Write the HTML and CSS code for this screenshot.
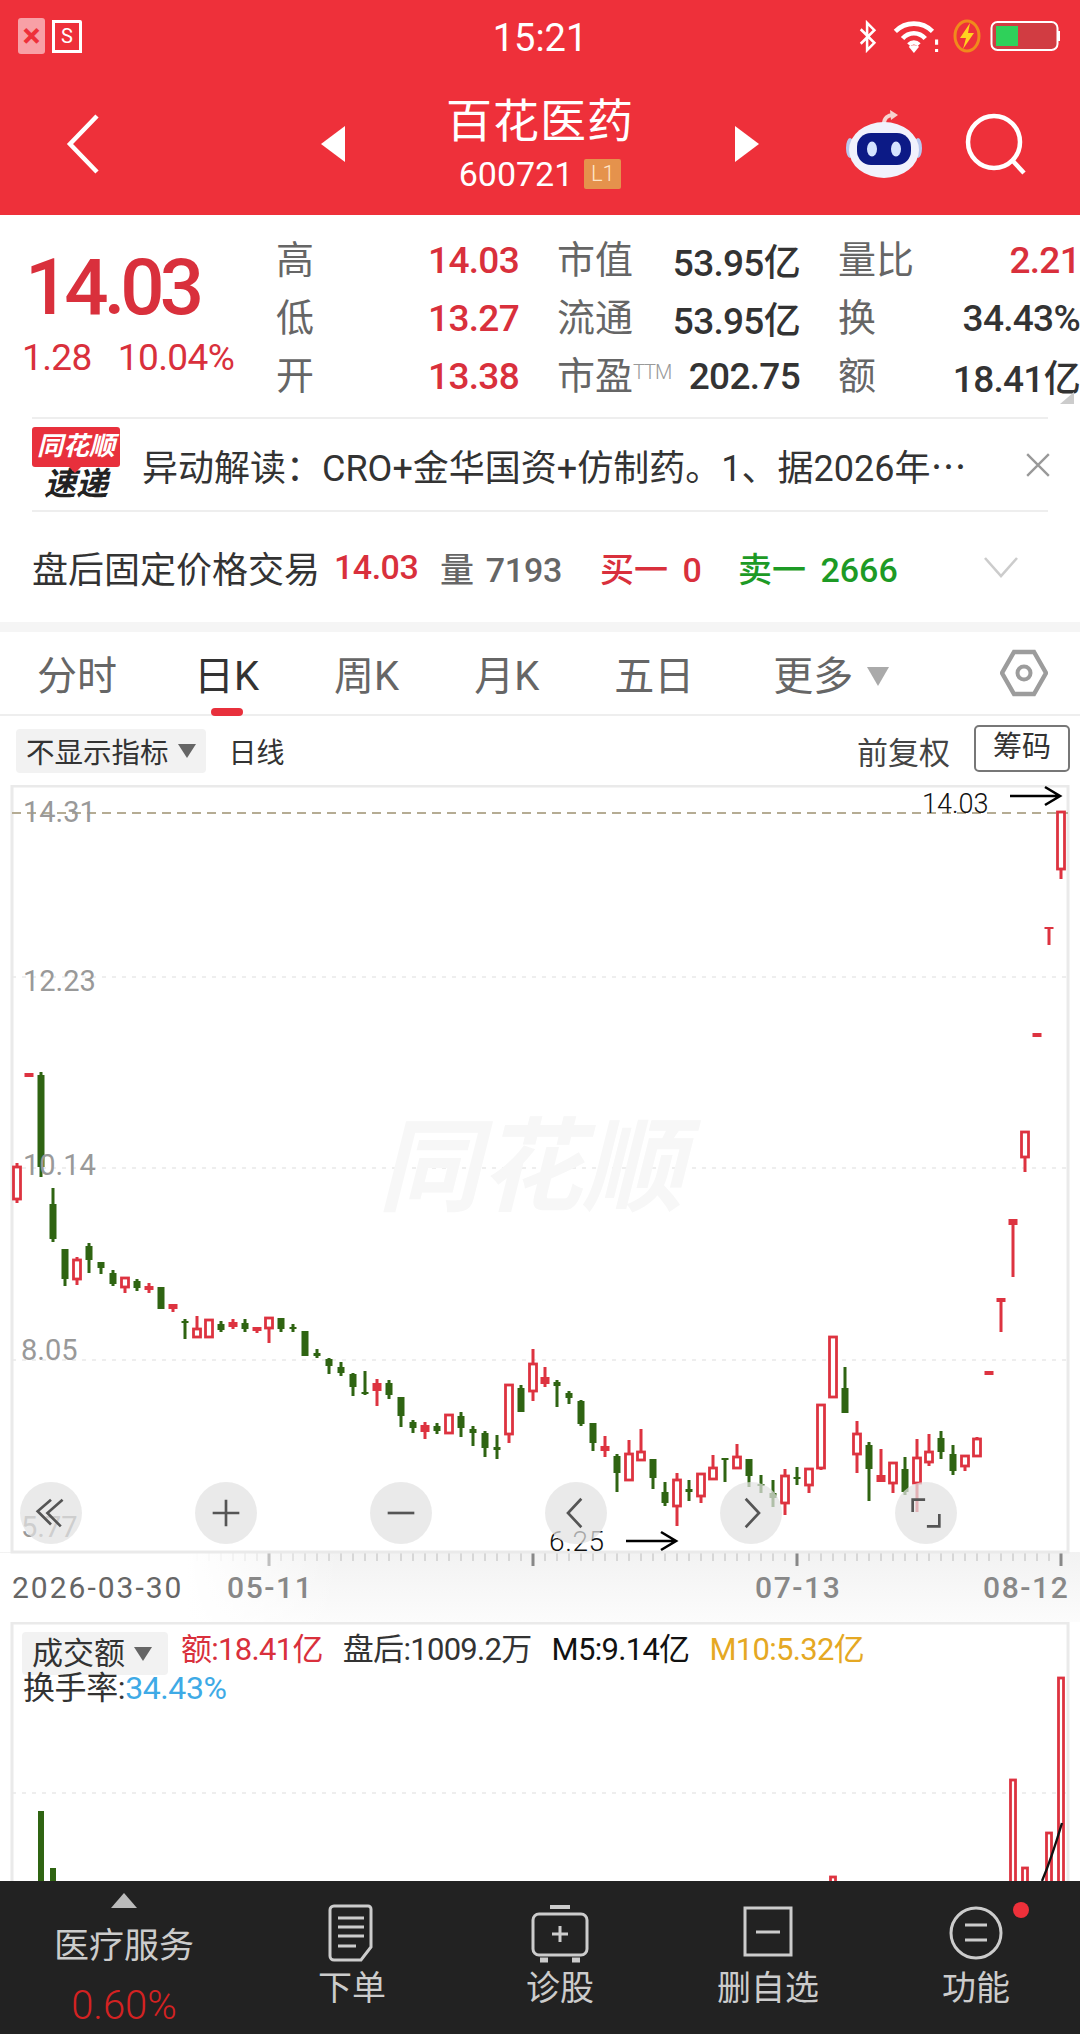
FILE: index.html
```html
<!DOCTYPE html>
<html lang="zh-CN">
<head>
  <meta charset="UTF-8">
  <meta name="viewport" content="width=device-width, initial-scale=1.0">
  <title>百花医药 600721</title>
  <link rel="stylesheet" href="styles.css">
</head>
<body>
  <header class="top">
    <div class="status">
      <div class="status-left">
        <span class="shot-x">×</span>
        <span class="shot-s">S</span>
      </div>
      <div class="clock">15:21</div>
      <div class="status-right">
        <svg class="ic-bt" viewBox="0 0 22 34" fill="none" stroke="#fff" stroke-width="2.8"><path d="M3 9 18 24 10 32V2l8 8L3 25"/></svg>
        <svg class="ic-wifi" viewBox="0 0 46 32" fill="none" stroke="#fff" stroke-width="4.4"><path d="M2 11C12 1 28 1 38 11"/><path d="M9 18C15 11 25 11 31 18"/><path d="M15 24C18 21 22 21 25 24"/><path d="M20 32 15 26C18 24 22 24 25 26Z" fill="#fff" stroke="none"/><path d="M42 19v5M42 28v3" stroke-width="3"/></svg>
        <svg class="ic-charge" viewBox="0 0 28 34"><ellipse cx="14" cy="17" rx="12" ry="15" fill="none" stroke="#f08a1c" stroke-width="3"/><path d="M17 4 7 19h6l-3 11 11-16h-6z" fill="#ffd21f"/></svg>
        <svg class="ic-batt" viewBox="0 0 72 32"><rect x="1.5" y="2" width="66" height="28" rx="6" fill="#b3474a" fill-opacity=".5" stroke="#fff" stroke-width="2"/><rect x="6" y="6" width="22" height="20" fill="#2fd15a"/><path d="M69 11v10" stroke="#fff" stroke-width="2"/></svg>
      </div>
    </div>
    <nav class="nav">
      <svg class="ic-back" viewBox="0 0 34 60" fill="none" stroke="#fff" stroke-width="4.5"><path d="M31 2 4 30l27 28"/></svg>
      <svg class="ic-tri" viewBox="0 0 24 36"><path d="M24 0v36L0 18z" fill="#fff"/></svg>
      <div class="title">
        <div class="name">百花医药</div>
        <div class="code">600721<span class="lv">L1</span></div>
      </div>
      <svg class="ic-tri" viewBox="0 0 24 36"><path d="M0 0v36l24-18z" fill="#fff"/></svg>
      <svg class="ic-robot" viewBox="0 0 80 68">
        <path d="M40 14C40 8 44 5 49 5" fill="none" stroke="#f6d3d0" stroke-width="4"/>
        <path d="M46 0l8 5-7 5z" fill="#f6d3d0"/>
        <ellipse cx="6" cy="38" rx="4" ry="10" fill="#b9c8ee"/>
        <ellipse cx="74" cy="38" rx="4" ry="10" fill="#b9c8ee"/>
        <ellipse cx="40" cy="40" rx="35" ry="28" fill="#f1f2fc"/>
        <rect x="13" y="23" width="54" height="32" rx="14" fill="#0c1a86"/>
        <ellipse cx="28" cy="39" rx="5" ry="7.5" fill="#d5e4ff"/>
        <ellipse cx="52" cy="39" rx="5" ry="7.5" fill="#d5e4ff"/>
      </svg>
      <svg class="ic-search" viewBox="0 0 62 62" fill="none" stroke="#fff" stroke-width="4.5"><circle cx="29" cy="29" r="26"/><path d="M47 47l12 13"/></svg>
    </nav>
  </header>

  <section class="quote">
    <div class="price-box">
      <div class="price">14.03</div>
      <div class="change"><span>1.28</span><span>10.04%</span></div>
    </div>
    <div class="stats">
      <div class="stat"><span class="k">高</span><span class="v up">14.03</span></div>
      <div class="stat"><span class="k">市值</span><span class="v">53.95亿</span></div>
      <div class="stat"><span class="k">量比</span><span class="v up">2.21</span></div>
      <div class="stat"><span class="k">低</span><span class="v up">13.27</span></div>
      <div class="stat"><span class="k">流通</span><span class="v">53.95亿</span></div>
      <div class="stat"><span class="k">换</span><span class="v">34.43%</span></div>
      <div class="stat"><span class="k">开</span><span class="v up">13.38</span></div>
      <div class="stat"><span class="k">市盈<sup class="ttm">TTM</sup></span><span class="v">202.75</span></div>
      <div class="stat"><span class="k">额</span><span class="v">18.41亿</span></div>
    </div>
    <div class="corner"></div>
  </section>

  <section class="news">
    <div class="news-logo">
      <div class="logo-tag">同花顺</div>
      <div class="logo-sub">速递</div>
    </div>
    <div class="news-text">异动解读：CRO+金华国资+仿制药。1、据2026年⋯</div>
    <svg class="ic-close" viewBox="0 0 24 24" fill="none" stroke="#999" stroke-width="2.2"><path d="M2 2l20 20M22 2 2 22"/></svg>
  </section>

  <section class="after">
    <span class="after-name">盘后固定价格交易</span>
    <span class="up after-price">14.03</span>
    <span class="after-vol">量 7193</span>
    <span class="up after-buy">买一 0</span>
    <span class="down after-sell">卖一 2666</span>
    <svg class="ic-more" viewBox="0 0 36 22" fill="none" stroke="#ccc" stroke-width="2.6"><path d="M2 2l16 18L34 2"/></svg>
  </section>

  <div class="band"></div>

  <div class="tabs">
    <span class="tab tab-first">分时</span>
    <span class="tab active">日K</span>
    <span class="tab">周K</span>
    <span class="tab">月K</span>
    <span class="tab">五日</span>
    <span class="tab tab-last">更多<i class="caret"></i></span>
    <svg class="ic-hex" viewBox="0 0 48 48" fill="none" stroke="#9c9c9c"><path d="M14 3h20l12 21-12 21H14L2 24z" stroke-width="4.4"/><circle cx="24" cy="24" r="6.5" stroke-width="4"/></svg>
  </div>

  <div class="tools">
    <span class="pick">不显示指标<i class="caret-sm"></i></span>
    <span class="line-type">日线</span>
    <span class="adjust">前复权</span>
    <span class="chip">筹码</span>
  </div>

  <div class="kline">
    <svg class="kline-svg" viewBox="0 785 1080 837" width="1080" height="837">
      <defs>
        <linearGradient id="axisV" x1="0" y1="0" x2="0" y2="1">
          <stop offset="0" stop-color="#f2f2f2"/>
          <stop offset="1" stop-color="#fcfcfc"/>
        </linearGradient>
        <linearGradient id="axisH" x1="0" y1="0" x2="1" y2="0">
          <stop offset=".55" stop-color="#fff"/>
          <stop offset="1" stop-color="#fff" stop-opacity="0"/>
        </linearGradient>
      </defs>
      <rect x="0" y="1552" width="1080" height="70" fill="url(#axisV)"/>
      <g id="ticks"></g>
      <rect x="0" y="1553" width="340" height="69" fill="url(#axisH)"/>
      <rect x="12" y="786" width="1056" height="766" fill="none" stroke="#eaeaea" stroke-width="3"/>
      <g class="grid">
        <path d="M12 977H1068M12 1168H1068M12 1360H1068"/>
      </g>
      <path class="top-line" d="M12 813H1068"/>
      <text class="mark" x="378" y="1203">同花顺</text>
      <g id="candles"></g>
      <text class="scale" x="23" y="822">14.31</text>
      <text class="scale" x="23" y="991">12.23</text>
      <text class="scale" x="23" y="1175">10.14</text>
      <text class="scale" x="21" y="1360">8.05</text>
      <text class="scale" x="21" y="1537">5.77</text>
      <text class="tip" x="922" y="813">14.03</text>
      <path class="arrow" d="M1010 796H1060M1045 787 1060 796 1045 805"/>
      <text class="tip tip-low" x="549" y="1551">6.25</text>
      <path class="arrow" d="M626 1541H676M661 1532 676 1541 661 1550"/>
      <text class="date dark" x="12" y="1598">2026-03-30</text>
      <text class="date" x="227" y="1598">05-11</text>
      <text class="date" x="755" y="1598">07-13</text>
      <text class="date" x="983" y="1598">08-12</text>
    </svg>
    <div class="float-btns">
      <span class="fbtn"><svg viewBox="0 0 36 36" fill="none" stroke="#555" stroke-width="3"><path d="M18 4 3 17l15 15M31 4 14 19l15 15" transform="translate(0 -1)"/></svg></span>
      <span class="fbtn"><svg viewBox="0 0 36 36" fill="none" stroke="#555" stroke-width="3"><path d="M3 18h30M18 3v30"/></svg></span>
      <span class="fbtn"><svg viewBox="0 0 36 36" fill="none" stroke="#555" stroke-width="3"><path d="M3 18h30"/></svg></span>
      <span class="fbtn"><svg viewBox="0 0 36 36" fill="none" stroke="#555" stroke-width="3"><path d="M24 2 9 18l15 16"/></svg></span>
      <span class="fbtn"><svg viewBox="0 0 36 36" fill="none" stroke="#555" stroke-width="3"><path d="M12 2l15 16-15 16"/></svg></span>
      <span class="fbtn"><svg viewBox="0 0 36 36" fill="none" stroke="#555" stroke-width="3"><path d="M17 3H3v14M19 33h14V19"/></svg></span>
    </div>
  </div>

  <div class="volume">
    <svg class="volume-svg" viewBox="0 1622 1080 259" width="1080" height="259">
      <rect x="12" y="1623" width="1056" height="270" fill="none" stroke="#eaeaea" stroke-width="3"/>
      <path class="grid-line" d="M12 1793H1068"/>
      <g id="bars"></g>
      <path class="ma" d="M1042 1881C1050 1862 1054 1850 1062 1823"/>
    </svg>
    <div class="legend">
      <span class="pick pick-vol">成交额<i class="caret-sm"></i></span>
      <span class="up">额:18.41亿</span>
      <span>盘后:1009.2万</span>
      <span class="m5">M5:9.14亿</span>
      <span class="m10">M10:5.32亿</span>
    </div>
    <div class="legend-two">换手率:<span class="rate">34.43%</span></div>
  </div>

  <footer class="bar">
    <div class="bar-sector">
      <i class="caret-up"></i>
      <div class="sector-name">医疗服务</div>
      <div class="sector-pct">0.60%</div>
    </div>
    <div class="bar-item">
      <svg viewBox="0 0 60 60" fill="none" stroke="#ccc" stroke-width="3"><path d="M12 3h34a3 3 0 0 1 3 3v38l-10 13H12a4 4 0 0 1-4-4V7a4 4 0 0 1 4-4z"/><path d="M16 15h26M16 24h26M16 33h26M16 43h18"/></svg>
      <span>下单</span>
    </div>
    <div class="bar-item">
      <svg viewBox="0 0 60 60" fill="none" stroke="#ccc" stroke-width="3"><path d="M20 4h20" stroke-width="4"/><rect x="3" y="11" width="54" height="41" rx="6"/><path d="M22 31h16M30 23v16"/><path d="M10 57h8M42 57h8" stroke-width="5"/></svg>
      <span>诊股</span>
    </div>
    <div class="bar-item">
      <svg viewBox="0 0 60 60" fill="none" stroke="#ccc" stroke-width="3"><rect x="7" y="5" width="46" height="47"/><path d="M18 29h24"/></svg>
      <span>删自选</span>
    </div>
    <div class="bar-item dot">
      <svg viewBox="0 0 60 60" fill="none" stroke="#ccc" stroke-width="3"><circle cx="30" cy="30" r="25"/><path d="M19 22h22M19 37h22"/></svg>
      <span>功能</span>
    </div>
  </footer>

  <script src="chart.js"></script>
</body>
</html>
```

FILE: styles.css
```css
* {
  box-sizing: border-box;
}
html, body {
  margin: 0;
  padding: 0;
}
body {
  width: 1080px;
  height: 2034px;
  overflow: hidden;
  background: #fff;
  color: #333;
  font-family: Roboto, "Noto Sans CJK SC", sans-serif;
}
.up {
  color: #d9303c;
}
.down {
  color: #1d9a25;
}

/* header */
.top {
  height: 215px;
  background: #ee303a;
  color: #fff;
}
.status {
  height: 72px;
  display: grid;
  grid-template-columns: 1fr auto 1fr;
  align-items: center;
}
.status-left {
  display: flex;
  align-items: center;
  gap: 7px;
  padding: 0 0 0 18px;
}
.shot-x {
  width: 27px;
  height: 36px;
  border-radius: 3px;
  background: #f8a0a6;
  color: #ee303a;
  font-size: 34px;
  font-weight: 700;
  line-height: 34px;
  text-align: center;
}
.shot-s {
  width: 30px;
  height: 33px;
  border: 3px solid #fff;
  border-top-right-radius: 2px;
  font-size: 20px;
  line-height: 26px;
  text-align: center;
}
.clock {
  font-size: 38px;
  margin-top: 3px;
}
.status-right {
  display: flex;
  align-items: center;
  justify-content: flex-end;
  padding-right: 18px;
}
.ic-bt {
  width: 20px;
  height: 33px;
  margin-right: 15px;
}
.ic-wifi {
  width: 48px;
  height: 33px;
  margin-right: 12px;
}
.ic-charge {
  width: 28px;
  height: 34px;
  margin-right: 9px;
}
.ic-batt {
  width: 72px;
  height: 32px;
}
.nav {
  height: 143px;
  display: flex;
  align-items: center;
  padding-left: 66px;
}
.ic-back {
  width: 34px;
  height: 60px;
  margin-right: 221px;
}
.ic-tri {
  width: 24px;
  height: 36px;
}
.title {
  width: 390px;
  text-align: center;
}
.name {
  font-size: 46px;
  line-height: 60px;
  letter-spacing: 1px;
  margin-top: -2px;
}
.code {
  display: flex;
  align-items: center;
  justify-content: center;
  gap: 11px;
  font-size: 34px;
  line-height: 40px;
  margin-top: 3px;
}
.lv {
  width: 37px;
  height: 30px;
  border-radius: 2px;
  background: #e5924c;
  color: #ffe6c8;
  font-size: 22px;
  font-weight: 300;
  line-height: 30px;
  text-align: center;
}
.ic-robot {
  width: 80px;
  height: 68px;
  margin-left: 85px;
}
.ic-search {
  width: 62px;
  height: 62px;
  margin-left: 41px;
}

/* quote block */
.quote {
  position: relative;
  height: 202px;
  display: flex;
  padding-top: 14px;
}
.price-box {
  width: 277px;
  padding-left: 25px;
}
.price {
  color: #d9303c;
  font-size: 78px;
  font-weight: 500;
  line-height: 86px;
  letter-spacing: -5px;
  margin-top: 16px;
}
.change {
  display: flex;
  gap: 26px;
  color: #d9303c;
  font-size: 37px;
  line-height: 44px;
  letter-spacing: -0.6px;
  margin-top: 5px;
  margin-left: -3px;
}
.stats {
  display: grid;
  grid-template-columns: 242px 242px 241px;
  grid-auto-rows: 58px;
  column-gap: 39px;
}
.stat {
  display: flex;
  align-items: center;
  justify-content: space-between;
}
.k {
  color: #666;
  font-size: 38px;
  white-space: nowrap;
  margin-top: -4px;
  margin-left: -1px;
}
.ttm {
  color: #999;
  font-size: 20px;
  font-weight: 300;
  vertical-align: 10px;
  line-height: 0;
  letter-spacing: -1px;
}
.v {
  font-size: 37px;
  font-weight: 500;
  letter-spacing: -0.7px;
  white-space: nowrap;
  margin-top: 4px;
}
.corner {
  position: absolute;
  right: 6px;
  bottom: 13px;
  width: 0;
  height: 0;
  border-left: 14px solid transparent;
  border-bottom: 12px solid #ccc;
}

/* news */
.news {
  height: 95px;
  margin: 0 32px;
  display: flex;
  align-items: center;
  border-top: 2px solid #eee;
  border-bottom: 2px solid #eee;
}
.news-logo {
  position: relative;
  width: 88px;
  margin-top: -2px;
  text-align: center;
}
.logo-tag {
  height: 40px;
  border-radius: 3px;
  background: #e8303c;
  color: #fff;
  font-size: 26px;
  font-style: italic;
  font-weight: 700;
  line-height: 38px;
}
.logo-tag::after {
  content: "";
  position: absolute;
  left: 37px;
  top: 40px;
  border-left: 6px solid transparent;
  border-right: 6px solid transparent;
  border-top: 6px solid #e8303c;
}
.logo-sub {
  color: #222;
  font-size: 32px;
  font-style: italic;
  font-weight: 700;
  line-height: 34px;
}
.news-text {
  flex: 1;
  margin-left: 22px;
  font-size: 36px;
  white-space: nowrap;
}
.ic-close {
  width: 26px;
  height: 26px;
  margin-right: -3px;
}

/* after hours row */
.after {
  height: 110px;
  display: flex;
  align-items: center;
  padding-left: 32px;
  font-size: 34px;
  font-weight: 500;
  white-space: nowrap;
}
.after-name {
  width: 302px;
  font-size: 36px;
  font-weight: 400;
}
.after-price {
  width: 106px;
  letter-spacing: -0.5px;
}
.after-vol {
  width: 160px;
  color: #666;
  word-spacing: 4px;
  letter-spacing: -0.3px;
}
.after-buy {
  width: 138px;
  word-spacing: 6px;
}
.after-sell {
  width: 245px;
  word-spacing: 6px;
}
.ic-more {
  width: 36px;
  height: 22px;
}
.band {
  height: 10px;
  background: #f5f5f5;
}

/* period tabs */
.tabs {
  height: 84px;
  display: flex;
  align-items: center;
  gap: 75px;
  padding: 0 0 0 37px;
  border-bottom: 2px solid #eee;
}
.tab {
  position: relative;
  color: #666;
  font-size: 40px;
  white-space: nowrap;
}
.tab-first {
  margin-right: 2px;
}
.tab-last {
  margin-left: 4px;
}
.tab.active {
  color: #333;
}
.tab.active::after {
  content: "";
  position: absolute;
  left: 17px;
  bottom: -14px;
  width: 32px;
  height: 8px;
  border-radius: 4px;
  background: #e8303c;
}
.caret {
  display: inline-block;
  margin-left: 14px;
  vertical-align: 4px;
  border-left: 11px solid transparent;
  border-right: 11px solid transparent;
  border-top: 19px solid #aaa;
}
.ic-hex {
  width: 48px;
  height: 48px;
  margin-left: auto;
  margin-right: 32px;
}

/* chart toolbar */
.tools {
  height: 69px;
  display: flex;
  align-items: center;
  padding-left: 16px;
}
.pick {
  display: inline-flex;
  align-items: center;
  height: 44px;
  padding: 0 10px;
  border-radius: 4px;
  background: #f2f2f2;
  color: #333;
  font-size: 28.5px;
}
.caret-sm {
  margin-left: 9px;
  border-left: 9px solid transparent;
  border-right: 9px solid transparent;
  border-top: 14px solid #666;
}
.line-type {
  margin-left: 23px;
  font-size: 28px;
}
.adjust {
  margin-left: auto;
  color: #444;
  font-size: 31px;
}
.chip {
  width: 96px;
  height: 47px;
  margin: -4px 10px 0 24px;
  border: 2px solid #777;
  border-radius: 5px;
  font-size: 29px;
  line-height: 41px;
  text-align: center;
}

/* k line chart */
.kline {
  position: relative;
  height: 837px;
}
.kline-svg {
  display: block;
}
.grid path, .grid-line {
  fill: none;
  stroke: #e9e9e9;
  stroke-width: 1.5;
  stroke-dasharray: 4 6;
}
.top-line {
  fill: none;
  stroke: #b5ac94;
  stroke-width: 2;
  stroke-dasharray: 9 6;
}
.mark {
  fill: #f7f7f7;
  font-size: 102px;
  font-style: italic;
  font-weight: 700;
}
.scale {
  fill: #999;
  font-size: 29px;
}
.tip {
  fill: #111;
  font-size: 27px;
  font-weight: 300;
}
.tip-low {
  font-size: 28px;
  letter-spacing: 0.6px;
}
.arrow {
  fill: none;
  stroke: #000;
  stroke-width: 2.6;
}
.date {
  fill: #888;
  font-size: 30px;
  font-weight: 500;
  letter-spacing: 1.6px;
}
.date.dark {
  fill: #666;
  font-weight: 400;
  letter-spacing: 2px;
}
.float-btns {
  position: absolute;
  left: 20px;
  right: 123px;
  top: 697px;
  display: flex;
  justify-content: space-between;
}
.fbtn {
  width: 62px;
  height: 62px;
  display: flex;
  align-items: center;
  justify-content: center;
  border-radius: 50%;
  background: rgba(226, 226, 226, 0.72);
}
.fbtn svg {
  width: 32px;
  height: 32px;
}

/* volume chart */
.volume {
  position: relative;
  height: 259px;
  overflow: hidden;
}
.volume-svg {
  position: absolute;
  left: 0;
  top: 0;
}
.ma {
  fill: none;
  stroke: #111;
  stroke-width: 2.4;
}
.legend {
  position: relative;
  display: flex;
  align-items: flex-start;
  gap: 20px;
  padding: 10px 0 0 22px;
  font-size: 31px;
  line-height: 36px;
  letter-spacing: -0.7px;
  white-space: nowrap;
}
.pick-vol {
  width: 146px;
  height: 43px;
  padding: 0 0 0 10px;
  font-size: 31px;
  letter-spacing: 0;
  margin-right: -7px;
}
.m5 {
  color: #111;
}
.m10 {
  color: #e5a823;
}
.legend-two {
  position: relative;
  margin-top: -3px;
  padding-left: 23px;
  font-size: 32px;
  line-height: 32px;
  letter-spacing: -0.4px;
}
.rate {
  color: #3eaae6;
}

/* bottom bar */
.bar {
  height: 153px;
  display: grid;
  grid-template-columns: 248px repeat(4, 208px);
  background: #222;
  color: #ccc;
}
.bar-sector {
  display: flex;
  flex-direction: column;
  align-items: center;
  padding-top: 12px;
}
.caret-up {
  border-left: 13px solid transparent;
  border-right: 13px solid transparent;
  border-bottom: 15px solid #bbb;
}
.sector-name {
  margin-top: 14px;
  font-size: 35px;
  line-height: 50px;
}
.sector-pct {
  margin-top: 9px;
  color: #d42222;
  font-size: 40px;
  font-weight: 300;
  line-height: 50px;
}
.bar-item {
  position: relative;
  display: flex;
  flex-direction: column;
  align-items: center;
  padding-top: 22px;
}
.bar-item svg {
  width: 60px;
  height: 60px;
}
.bar-item span {
  margin-top: 2px;
  font-size: 34px;
  line-height: 46px;
}
.bar-item.dot::after {
  content: "";
  position: absolute;
  left: 141px;
  top: 21px;
  width: 16px;
  height: 16px;
  border-radius: 50%;
  background: #ee303a;
}
```

FILE: chart.js
```js
// candles: [r|g, bodyTop, bodyBottom, wickTop, wickBottom] in page pixels
const candles = [
  ['r',1166,1200,1163,1203],['r',1073,1077,1073,1077],['g',1075,1167,1072,1177],['g',1204,1239,1188,1242],
  ['g',1249,1279,1249,1286],['r',1259,1280,1257,1285],['g',1246,1260,1243,1273],['g',1262,1268,1262,1274],
  ['g',1273,1284,1270,1286],['r',1277,1288,1277,1293],['g',1281,1288,1279,1291],['r',1286,1290,1283,1293],
  ['g',1287,1309,1287,1309],['r',1304,1309,1304,1312],['g',1321,1323,1319,1339],['r',1328,1338,1316,1338],
  ['r',1319,1338,1319,1338],['g',1324,1330,1321,1332],['r',1322,1327,1319,1329],['g',1323,1329,1319,1332],
  ['r',1327,1331,1327,1333],['r',1317,1329,1317,1343],['g',1318,1329,1318,1332],['g',1327,1329,1324,1332],
  ['g',1331,1356,1331,1356],['g',1353,1356,1349,1358],['g',1359,1366,1358,1374],['g',1367,1373,1362,1376],
  ['g',1374,1387,1373,1396],['g',1392,1394,1371,1395],['r',1383,1391,1379,1406],['g',1383,1395,1380,1399],
  ['g',1397,1416,1397,1427],['g',1422,1428,1420,1433],['r',1425,1432,1422,1439],['g',1426,1431,1423,1434],
  ['r',1414,1434,1414,1434],['g',1416,1428,1412,1437],['g',1429,1433,1426,1446],['g',1433,1448,1431,1457],
  ['g',1447,1450,1435,1459],['r',1384,1435,1384,1443],['g',1388,1412,1385,1412],['r',1363,1392,1349,1401],
  ['r',1377,1384,1367,1387],['g',1382,1386,1380,1407],['g',1393,1398,1391,1404],['g',1401,1424,1400,1426],
  ['g',1423,1443,1423,1451],['r',1446,1451,1436,1457],['g',1456,1473,1454,1492],['r',1453,1481,1440,1481],
  ['r',1451,1461,1429,1461],['g',1459,1478,1459,1489],['g',1492,1503,1482,1506],['r',1479,1507,1473,1526],
  ['g',1489,1492,1480,1501],['r',1473,1497,1473,1503],['r',1467,1480,1455,1480],['g',1458,1460,1458,1482],
  ['r',1456,1469,1444,1469],['g',1459,1476,1459,1487],['g',1484,1486,1475,1493],['g',1493,1498,1480,1507],
  ['r',1475,1504,1469,1515],['g',1477,1479,1467,1485],['r',1468,1486,1468,1493],['r',1404,1469,1404,1470],
  ['r',1336,1398,1336,1398],['g',1388,1413,1367,1413],['r',1433,1455,1421,1473],['g',1445,1469,1442,1501],
  ['r',1475,1482,1449,1482],['r',1462,1484,1462,1493],['g',1469,1492,1457,1495],['r',1457,1484,1439,1512],
  ['r',1451,1463,1434,1466],['g',1438,1452,1431,1459],['g',1454,1471,1445,1475],['r',1455,1467,1455,1471],
  ['r',1438,1457,1437,1457],['r',1371,1375,1371,1375],['r',1298,1302,1298,1332],['r',1219,1225,1219,1277],
  ['r',1131,1158,1131,1172],['r',1033,1037,1033,1037],['r',927,929,927,945],['r',811,870,811,879]
];

// volume bars: [candle index, top y, colour]
const bars = [
  [2, 1811, 'g'], [3, 1868, 'g'], [68, 1876, 'r'],
  [83, 1779, 'r'], [84, 1867, 'r'], [86, 1832, 'r'], [87, 1677, 'r']
];

const RED = '#dd3340';
const GREEN = '#2f6412';
const NS = 'http://www.w3.org/2000/svg';

function xOf(i) {
  return 17 + 12 * i;
}

function rect(parent, x, y, w, h, fill, stroke) {
  const r = document.createElementNS(NS, 'rect');
  r.setAttribute('x', x);
  r.setAttribute('y', y);
  r.setAttribute('width', w);
  r.setAttribute('height', h);
  r.setAttribute('fill', fill);
  if (stroke) {
    r.setAttribute('stroke', stroke);
    r.setAttribute('stroke-width', 2.8);
  }
  parent.appendChild(r);
}

function drawCandles() {
  const g = document.getElementById('candles');
  candles.forEach((c, i) => {
    const [kind, top, bottom, high, low] = c;
    const x = xOf(i);
    const color = kind === 'r' ? RED : GREEN;
    rect(g, x - 1.5, high, 3, low - high, color);
    if (kind === 'g') {
      rect(g, x - 3.5, top, 7, bottom - top, color);
    } else if (bottom - top > 8) {
      rect(g, x - 3.5, top + 1, 7, bottom - top - 2, '#fff', color);
    } else {
      rect(g, x - 4.5, top, 9, bottom - top, color);
    }
  });
}

function drawTicks() {
  const g = document.getElementById('ticks');
  for (let x = 17; x <= 1061; x += 12) {
    const major = x === 269 || x === 533 || x === 797 || x === 1061;
    rect(g, x - (major ? 1.5 : 0.5), 1553, major ? 3 : 1, major ? 13 : 8, major ? '#888' : '#bbb');
  }
}

function drawBars() {
  const g = document.getElementById('bars');
  bars.forEach(([i, top, kind]) => {
    const x = xOf(i);
    if (kind === 'g') {
      rect(g, x - 3, top, 6, 1881 - top, GREEN);
    } else {
      rect(g, x - 2.5, top + 1, 5, 1890 - top, '#fff', RED);
    }
  });
}

drawTicks();
drawCandles();
drawBars();
```
